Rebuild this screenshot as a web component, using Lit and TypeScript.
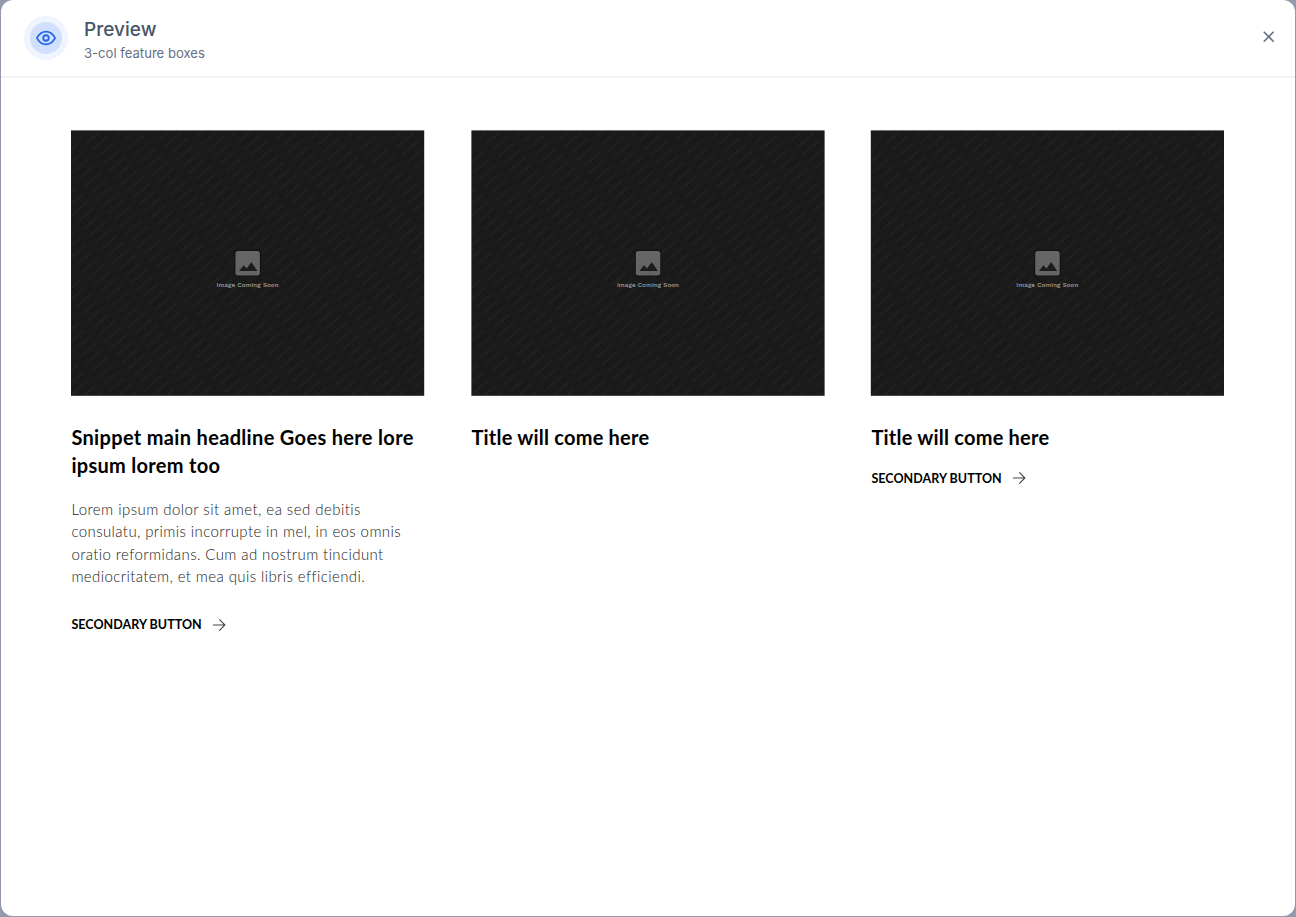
import { LitElement, html, css, nothing } from "lit";
import { customElement, property } from "lit/decorators.js";

interface Line { text: string; spacing: number }
interface Feature { offset: number; title: Line[]; body?: Line[]; button?: string }

const FEATURES: Feature[] = [
  {
    offset: 0,
    title: [
      { text: "Snippet main headline Goes here lore", spacing: 0.33 },
      { text: "ipsum lorem too", spacing: 0.3 },
    ],
    body: [
      { text: "Lorem ipsum dolor sit amet, ea sed debitis", spacing: 0.45 },
      { text: "consulatu, primis incorrupte in mel, in eos omnis", spacing: 0.4 },
      { text: "oratio reformidans. Cum ad nostrum tincidunt", spacing: 0.4 },
      { text: "mediocritatem, et mea quis libris efficiendi.", spacing: 0.4 },
    ],
    button: "SECONDARY BUTTON",
  },
  { offset: 0.4, title: [{ text: "Title will come here", spacing: 0.22 }] },
  { offset: -0.2, title: [{ text: "Title will come here", spacing: 0.22 }], button: "SECONDARY BUTTON" },
];

@customElement("image-placeholder")
export class ImagePlaceholder extends LitElement {
  @property({ type: Number }) offset = 0;
  static styles = css`
    :host { display: block; height: 266px; }
    svg { display: block; width: 353px; height: 266px; overflow: visible; }
    .caption { font: 500 6.2px "Work Sans", Inter, sans-serif; fill: #aaa; }
  `;
  render() {
    return html`<svg viewBox="0 0 353 266">
      <defs>
        <pattern id="dashes" width="58" height="9" patternUnits="userSpaceOnUse" patternTransform="rotate(-41)">
          <path d="M2 2H24M31 6.5H53" stroke="#202020" stroke-width="1.9" />
        </pattern>
      </defs>
      <g transform="translate(${this.offset} 0)">
        <rect y="0.4" width="353.2" height="265.4" fill="#1a1a1a" />
        <rect x="1" y="2" width="351" height="263" fill="url(#dashes)" />
        <rect x="163.5" y="120" width="26.5" height="26.5" rx="3.5" fill="#101010" />
        <rect x="164.4" y="121" width="24.5" height="24.5" rx="2.5" fill="#656565" />
        <path d="M168 141l4.7-5.800 3 3.400 4.700-6.600 6 9z" fill="#1c1c1c" />
        <text class="caption" x="176.5" y="157.4" text-anchor="middle" textLength="62">Image Coming Soon</text>
      </g>
    </svg>`;
  }
}

@customElement("feature-card")
export class FeatureCard extends LitElement {
  @property({ attribute: false }) feature!: Feature;
  static styles = css`
    :host { display: block; font-family: Lato, sans-serif; min-width: 0; }
    .copy { padding-left: 0.4px; }
    h2 { margin: 27px 0 0; font-size: 20px; line-height: 28px; font-weight: 700; color: #000; }
    p { margin: 19px 0 25px; font-size: 15px; line-height: 22.4px; color: #222; font-weight: 300; }
    .line { display: table; white-space: nowrap; }
    .button { display: flex; align-items: center; gap: 11.5px; margin-top: 15px; height: 24px; font-size: 12.5px; letter-spacing: 0.04px; font-weight: 700; color: #000; }
  `;
  private lines(lines: Line[]) {
    return lines.map((l) => html`<span class="line" style="letter-spacing:${l.spacing}px">${l.text}</span>`);
  }
  render() {
    const f = this.feature;
    return html`<image-placeholder .offset=${f.offset}></image-placeholder>
      <div class="copy">
        <h2>${this.lines(f.title)}</h2>
        ${f.body ? html`<p>${this.lines(f.body)}</p>` : nothing}
        ${f.button
          ? html`<div class="button"><span>${f.button}</span>
              <svg width="13" height="14" viewBox="0 0 13 14" fill="none" stroke="#444" stroke-width="1.1"><path d="M0 7H11.800M6.300 1.400L11.900 7L6.300 12.600" /></svg></div>`
          : nothing}
      </div>`;
  }
}

@customElement("app-root")
export class AppRoot extends LitElement {
  static styles = css`
    :host { display: block; height: 917px; box-sizing: border-box; padding: 0 1px 1px; background: #9199aa; overflow: hidden; }
    .dialog { height: 916px; background: #fff; border-radius: 12px; overflow: hidden; }
    header { display: flex; height: 78px; border-bottom: 2px solid #f2f3f5; box-sizing: border-box; padding: 16px 20px 0 23px; font-family: Inter, sans-serif; color: #475467; }
    .badge { width: 32px; height: 32px; border: 6.5px solid #eff4ff; border-radius: 50%; background: #d1e0ff; display: grid; place-items: center; }
    .heading { margin-left: 16px; flex: 1; }
    .title { font-size: 19px; line-height: 28px; font-weight: 460; letter-spacing: 0.03px; }
    .sub { margin-top: -1px; font-size: 13.1px; line-height: 20px; color: #667085; }
    .close { margin-top: 15px; width: 12px; height: 12px; }
    main { display: grid; grid-template-columns: repeat(3, 353px); column-gap: 47px; padding: 52px 0 0 70px; }
  `;
  render() {
    return html`<div class="dialog">
      <header>
        <div class="badge">
          <svg width="22" height="22" viewBox="0 0 24 24" fill="none" stroke="#2563f0" stroke-width="2" stroke-linecap="round" stroke-linejoin="round">
            <path d="M2.4 12.7c-.3-.5-.3-.9 0-1.4C3.500 9.500 6.900 5 12 5s8.500 4.500 9.600 6.300c.3.5.3.9 0 1.400C20.500 14.500 17.100 19 12 19s-8.500-4.500-9.600-6.300z" />
            <circle cx="12" cy="12" r="3" />
          </svg>
        </div>
        <div class="heading"><div class="title">Preview</div><div class="sub">3-col feature boxes</div></div>
        <svg class="close" viewBox="0 0 12 12" fill="none" stroke="#667085" stroke-width="1.6" stroke-linecap="round"><path d="M1.200 1.200L10.200 10.200M10.200 1.200L1.200 10.200" /></svg>
      </header>
      <main>${FEATURES.map((f) => html`<feature-card .feature=${f}></feature-card>`)}</main>
    </div>`;
  }
}
